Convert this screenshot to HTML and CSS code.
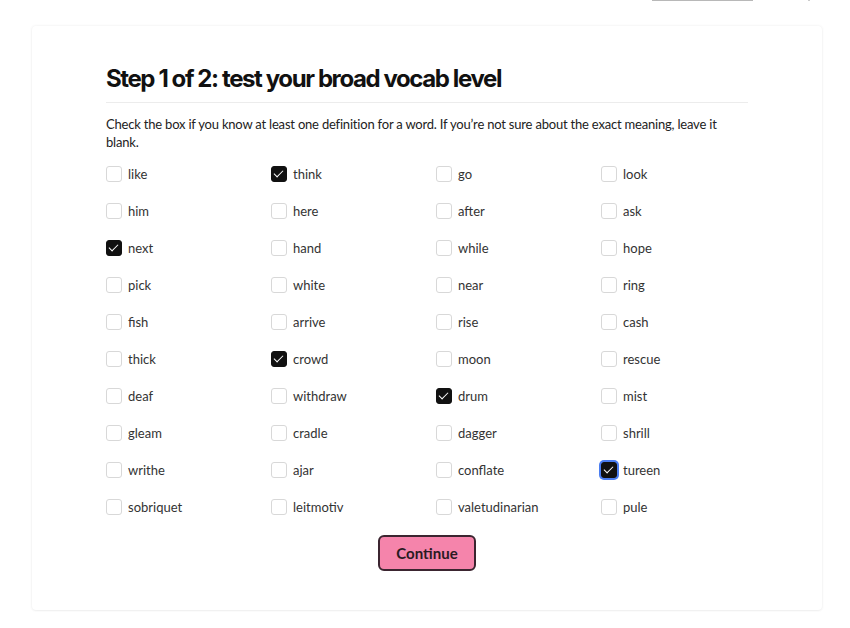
FILE: index.html
```html
<!DOCTYPE html>
<html>
<head>
<meta charset="utf-8">
<link rel="stylesheet" href="styles.css">
</head>
<body>
<div class="topbar"><span class="topline"></span><span class="topdot"></span></div>
<main class="card">
  <h1 class="title">Step 1 of 2: test your broad vocab level</h1>
  <hr class="divider">
  <p class="intro">Check the box if you know at least one definition for a word. If you’re not sure about the exact meaning, leave it blank.</p>
  <div class="grid">
    <label class="item"><span class="box"></span>like</label>
    <label class="item"><span class="box on"></span>think</label>
    <label class="item"><span class="box"></span>go</label>
    <label class="item"><span class="box"></span>look</label>
    <label class="item"><span class="box"></span>him</label>
    <label class="item"><span class="box"></span>here</label>
    <label class="item"><span class="box"></span>after</label>
    <label class="item"><span class="box"></span>ask</label>
    <label class="item"><span class="box on"></span>next</label>
    <label class="item"><span class="box"></span>hand</label>
    <label class="item"><span class="box"></span>while</label>
    <label class="item"><span class="box"></span>hope</label>
    <label class="item"><span class="box"></span>pick</label>
    <label class="item"><span class="box"></span>white</label>
    <label class="item"><span class="box"></span>near</label>
    <label class="item"><span class="box"></span>ring</label>
    <label class="item"><span class="box"></span>fish</label>
    <label class="item"><span class="box"></span>arrive</label>
    <label class="item"><span class="box"></span>rise</label>
    <label class="item"><span class="box"></span>cash</label>
    <label class="item"><span class="box"></span>thick</label>
    <label class="item"><span class="box on"></span>crowd</label>
    <label class="item"><span class="box"></span>moon</label>
    <label class="item"><span class="box"></span>rescue</label>
    <label class="item"><span class="box"></span>deaf</label>
    <label class="item"><span class="box"></span>withdraw</label>
    <label class="item"><span class="box on"></span>drum</label>
    <label class="item"><span class="box"></span>mist</label>
    <label class="item"><span class="box"></span>gleam</label>
    <label class="item"><span class="box"></span>cradle</label>
    <label class="item"><span class="box"></span>dagger</label>
    <label class="item"><span class="box"></span>shrill</label>
    <label class="item"><span class="box"></span>writhe</label>
    <label class="item"><span class="box"></span>ajar</label>
    <label class="item"><span class="box"></span>conflate</label>
    <label class="item"><span class="box on focus"></span>tureen</label>
    <label class="item"><span class="box"></span>sobriquet</label>
    <label class="item"><span class="box"></span>leitmotiv</label>
    <label class="item"><span class="box"></span>valetudinarian</label>
    <label class="item"><span class="box"></span>pule</label>
  </div>
  <div class="actions"><button class="continue">Continue</button></div>
</main>
</body>
</html>
```
FILE: styles.css
```css
html, body { margin: 0; padding: 0; background: #fff; }
body { font-family: "Lato", "Noto Sans", sans-serif; color: #222; width: 850px; height: 628px; overflow: hidden; }
.topbar { height: 26px; position: relative; }
.topline { position: absolute; left: 652px; top: 0; width: 101px; height: 1px; background: #b8b8b8; }
.topdot { position: absolute; left: 808px; top: 0; width: 2px; height: 1px; background: #ccc; }
.card {
  margin-left: 32px; width: 790px; height: 584px; box-sizing: border-box;
  background: #fff; border-radius: 4px;
  box-shadow: 0 0 3px rgba(0,0,0,0.08), 0 1px 2px rgba(0,0,0,0.04);
  padding: 38px 74px 0 74px;
}
.title { margin: 0; font-family: "Inter", sans-serif; font-size: 24px; line-height: 30px; font-weight: 700; letter-spacing: -1.4px; color: #111; }
.divider { margin: 8px 0 0 0; border: 0; border-top: 1px solid #ececec; width: 642px; }
.intro { margin: 12px 0 0 0; font-size: 13px; line-height: 18px; color: #222; width: 642px; letter-spacing: -0.2px; }
.grid { margin-top: 4px; display: grid; grid-template-columns: repeat(4, 165px); grid-auto-rows: 37px; }
.item { display: flex; align-items: center; height: 37px; font-size: 13px; color: #333; gap: 6px; }
.box { width: 14px; height: 14px; border: 1px solid #d8d8d8; border-radius: 3px; background: #fff; flex: none; position: relative; }
.box.on { background: #111; border-color: #111; }
.box.on::after { content: ""; position: absolute; left: 4px; top: 1px; width: 4px; height: 8px; border: solid #fff; border-width: 0 1.8px 1.8px 0; transform: rotate(45deg); }
.box.focus { box-shadow: 0 0 0 2px #4a7df0; }
.actions { display: flex; justify-content: center; margin-top: 10px; }
.continue {
  width: 98px; height: 36px; box-sizing: border-box; background: #f584ab; border: 2px solid #3b2530;
  border-radius: 6px; font-family: "Lato", sans-serif; font-weight: 700; font-size: 15px; color: #2a1a22; cursor: pointer;
}
```
